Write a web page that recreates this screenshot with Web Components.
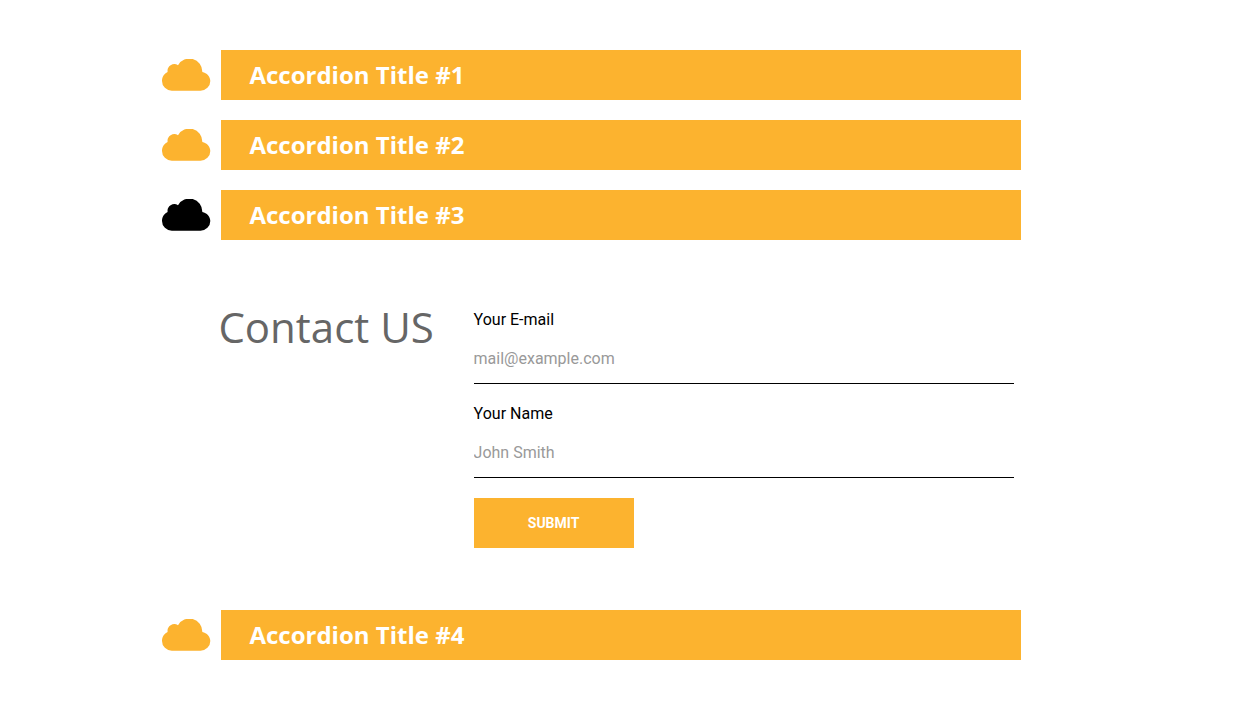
<!DOCTYPE html>
<html lang="en">
<head>
    <meta charset="UTF-8">
    <title>Accordion</title>
    <style>
        body {
            margin: 0;
            background-color: #fff;
            font-family: Roboto, sans-serif;
        }
    </style>
</head>
<body>
    <my-accordion>
        <accordion-item title="Accordion Title #1"></accordion-item>
        <accordion-item title="Accordion Title #2"></accordion-item>
        <accordion-item title="Accordion Title #3" open>
            <contact-form title="Contact US">
                <form-field label="Your E-mail" type="email" placeholder="mail@example.com"></form-field>
                <form-field label="Your Name" type="text" placeholder="John Smith"></form-field>
            </contact-form>
        </accordion-item>
        <accordion-item title="Accordion Title #4"></accordion-item>
    </my-accordion>

    <script>
        class CloudIcon extends HTMLElement {
            constructor() {
                super();
                this.attachShadow({mode: 'open'});
                this.shadowRoot.innerHTML = `
                    <style>
                        :host {
                            display: block;
                            width: 49px;
                            height: 32px;
                        }
                        svg {
                            display: block;
                            fill: currentColor;
                        }
                    </style>
                    <svg width="49" height="32" viewBox="0 0 49 32">
                        <path d="M9.800 31.700A9.800 9.700 0 0 1 0 22C0 18 2.200 14.700 5.600 13.100A6.900 6.900 0 0 1 16 6.200A13 13 0 0 1 40.300 12.900C45 13.700 48.300 17.500 48.300 22A9.800 9.700 0 0 1 38.500 31.700Z"/>
                    </svg>
                `;
            }
        }

        class AccordionItem extends HTMLElement {
            constructor() {
                super();
                this.attachShadow({mode: 'open'});
                this.shadowRoot.innerHTML = `
                    <style>
                        :host {
                            display: block;
                            --icon-color: #fcb32f;
                        }
                        :host([open]) {
                            --icon-color: #000;
                        }
                        .header {
                            display: grid;
                            grid-template-columns: 49px 800px;
                            column-gap: 10px;
                            align-items: center;
                            height: 50px;
                            cursor: pointer;
                        }
                        cloud-icon {
                            color: var(--icon-color);
                        }
                        .title {
                            box-sizing: border-box;
                            height: 50px;
                            padding-left: 28.4px;
                            background-color: #fcb32f;
                            color: #fff;
                            font: bold 24px/50px "Open Sans", sans-serif;
                        }
                        .content {
                            display: none;
                            box-sizing: border-box;
                            height: 350px;
                            padding: 60px 7px 0 56.4px;
                        }
                        :host([open]) .content {
                            display: block;
                        }
                    </style>
                    <div class="header">
                        <cloud-icon></cloud-icon>
                        <div class="title"></div>
                    </div>
                    <div class="content"><slot></slot></div>
                `;
            }
            connectedCallback() {
                this.shadowRoot.querySelector('.title').textContent = this.getAttribute('title');
                this.shadowRoot.querySelector('.header').addEventListener('click', this._toggle.bind(this));
            }
            _toggle() {
                this.toggleAttribute('open');
            }
        }

        class Accordion extends HTMLElement {
            constructor() {
                super();
                this.attachShadow({mode: 'open'});
                this.shadowRoot.innerHTML = `
                    <style>
                        :host {
                            display: flex;
                            flex-direction: column;
                            gap: 20px;
                            width: 859px;
                            padding: 50px 0 0 162px;
                        }
                    </style>
                    <slot></slot>
                `;
            }
        }

        class FormField extends HTMLElement {
            constructor() {
                super();
                this.attachShadow({mode: 'open'});
                this.shadowRoot.innerHTML = `
                    <style>
                        :host {
                            display: block;
                        }
                        label {
                            display: block;
                            padding-bottom: 4px;
                            color: #000;
                            font-size: 16px;
                            line-height: 20px;
                        }
                        input {
                            display: block;
                            box-sizing: border-box;
                            width: 100%;
                            height: 50px;
                            margin-bottom: 20px;
                            padding: 0;
                            border: none;
                            border-bottom: 1px solid #000;
                            border-radius: 0;
                            outline: none;
                            background: none;
                            font: 400 16px Roboto, sans-serif;
                        }
                        input::placeholder {
                            color: #999;
                        }
                    </style>
                    <label for="field"></label>
                    <input id="field">
                `;
            }
            connectedCallback() {
                const input = this.shadowRoot.querySelector('input');
                this.shadowRoot.querySelector('label').textContent = this.getAttribute('label');
                input.type = this.getAttribute('type');
                input.placeholder = this.getAttribute('placeholder');
            }
        }

        class ContactForm extends HTMLElement {
            constructor() {
                super();
                this.attachShadow({mode: 'open'});
                this.shadowRoot.innerHTML = `
                    <style>
                        :host {
                            display: grid;
                            grid-template-columns: 255.2px 540px;
                        }
                        h2 {
                            margin: 0;
                            color: #666;
                            font: 400 42px/54px "Open Sans", sans-serif;
                            white-space: nowrap;
                        }
                        form {
                            padding-top: 10px;
                        }
                        button {
                            display: block;
                            width: 160px;
                            height: 50px;
                            padding: 0;
                            border: none;
                            background-color: #fcb32f;
                            color: #fff;
                            font: bold 14px Roboto, sans-serif;
                            text-transform: uppercase;
                            cursor: pointer;
                        }
                    </style>
                    <h2></h2>
                    <form>
                        <slot></slot>
                        <button type="button">Submit</button>
                    </form>
                `;
            }
            connectedCallback() {
                this.shadowRoot.querySelector('h2').textContent = this.getAttribute('title');
            }
        }

        customElements.define('cloud-icon', CloudIcon);
        customElements.define('accordion-item', AccordionItem);
        customElements.define('my-accordion', Accordion);
        customElements.define('form-field', FormField);
        customElements.define('contact-form', ContactForm);
    </script>
</body>
</html>
